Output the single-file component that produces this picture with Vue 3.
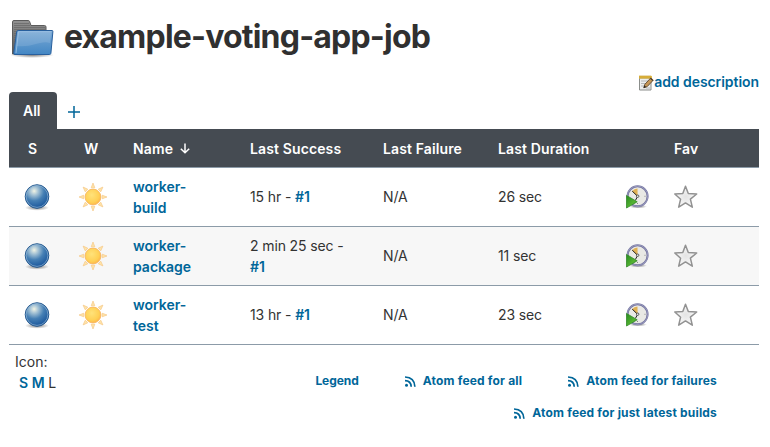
<script setup>
const jobs = [
  { name: ['worker-', 'build'], success: '15 hr -', duration: '26 sec' },
  { name: ['worker-', 'package'], success: '2 min 25 sec -', duration: '11 sec' },
  { name: ['worker-', 'test'], success: '13 hr -', duration: '23 sec' },
]
const feeds = ['all', 'failures', 'just latest builds']
const rays = [0, 45, 90, 135, 180, 225, 270, 315]
</script>

<template>
  <main class="page">
    <svg class="defs" width="0" height="0" aria-hidden="true">
      <defs>
        <linearGradient id="folderBack" x1="0" y1="0" x2="0" y2="1"><stop offset="0" stop-color="#929292" /><stop offset="1" stop-color="#555" /></linearGradient>
        <linearGradient id="folderFront" x1="0" y1="0" x2="0" y2="1"><stop offset="0" stop-color="#7ba9d5" /><stop offset="1" stop-color="#4387c4" /></linearGradient>
        <radialGradient id="shade"><stop offset="0" stop-color="#000" stop-opacity=".5" /><stop offset="1" stop-color="#000" stop-opacity="0" /></radialGradient>
        <radialGradient id="ball" cx=".38" cy=".27" r=".75"><stop offset="0" stop-color="#f2f4e4" /><stop offset=".22" stop-color="#a9c5d6" /><stop offset=".55" stop-color="#457fb4" /><stop offset="1" stop-color="#17539a" /></radialGradient>
        <radialGradient id="sun" cx=".42" cy=".38" r=".65"><stop offset="0" stop-color="#ffe27a" /><stop offset=".7" stop-color="#ffd055" /><stop offset="1" stop-color="#fdb548" /></radialGradient>
        <linearGradient id="play" x1="0" y1="0" x2="1" y2="1"><stop offset="0" stop-color="#278a20" /><stop offset=".6" stop-color="#55b432" /><stop offset="1" stop-color="#268018" /></linearGradient>
        <radialGradient id="star"><stop offset="0" stop-color="#e3e3e3" /><stop offset="1" stop-color="#fafafa" /></radialGradient>
      </defs>
    </svg>

    <header class="title">
      <svg class="folder" width="48" height="48" viewBox="0 0 48 48">
        <ellipse cx="23" cy="37" rx="22" ry="3" fill="url(#shade)" />
        <path d="M3.5 36V3.9q0-1.4 1.5-1.4h14.3q1 0 1.3 1l1.4 4h13.5q1.5 0 1.5 1.5v27z" fill="url(#folderBack)" stroke="#5b5b5b" />
        <path d="M5 5.5h15M5 7.5h16M5 9.5h31M5 11.5h31M5 13.5h3M5 15.5h3M5 17.5h2M5 19.5h2M5 21.5h2M5 23.5h2M5 25.5h2" stroke="#656565" stroke-width=".7" />
        <path d="M9.2 12.5h33.8q1 0 .9 1l-2 21.8q-.2 1.2-1.5 1.2H6q-1.4 0-1.3-1.4L7.7 13.8q.1-1.3 1.5-1.3z" fill="url(#folderFront)" stroke="#285f9d" />
        <path d="M9.3 13.7h33L41 25C31 22 24 30 7.4 28z" fill="#fff" opacity=".12" />
        <path d="M7 35L9.5 13.7h33" fill="none" stroke="#a9cae8" stroke-width=".7" />
      </svg>
      <h1>example-voting-app-job</h1>
    </header>

    <div class="describe">
      <svg width="16" height="16" viewBox="0 0 16 16">
        <path d="M1.5 3h11.5v12H1.5z" fill="#edeeee" stroke="#8b8e8b" />
        <path d="M1 .9h13v2.7H1z" fill="#e8c14c" />
        <path d="M2 .3v3M4 .3v3M6 .3v3M8 .3v3M10 .3v3M12 .3v3" stroke="#b88a17" stroke-width=".7" />
        <path d="M3 6h7M3 8.5h5M3 11h4M8 13h4" stroke="#b6b8b8" />
        <path d="M5.8 12.8l1-3.4 6-6.5 2.5 2.2-6.1 6.5z" fill="#c69656" stroke="#5d4528" stroke-width=".9" />
        <path d="M5.6 13l.9-2.6 1.6 1.5z" fill="#222" />
        <path d="M12.2 3.5l2.6 2.2" stroke="#3e3930" />
      </svg>
      <a>add description</a>
    </div>

    <nav class="tabs">
      <span class="tab">All</span>
      <a class="add" aria-label="New View">
        <svg width="12" height="12" viewBox="0 0 12 12"><path d="M6 0v12M0 6h12" stroke="#006699" stroke-width="1.5" /></svg>
      </a>
    </nav>

    <section class="jobs">
      <div class="row head">
        <span class="letter">S</span>
        <span class="letter">W</span>
        <span class="cell name-head">Name
          <svg width="10" height="11" viewBox="0 0 10 11"><path d="M5 .5v9.2M.8 5.7L5 9.8l4.2-4.1" fill="none" stroke="#fff" stroke-width="1.5" /></svg>
        </span>
        <span class="cell">Last Success</span>
        <span class="cell">Last Failure</span>
        <span class="cell">Last Duration</span>
        <span />
        <span class="fav">Fav</span>
      </div>
      <div v-for="job in jobs" :key="job.name[1]" class="row">
        <span class="status">
          <svg width="28" height="28" viewBox="0 0 28 28">
            <ellipse cx="14" cy="24.7" rx="12" ry="3" fill="url(#shade)" />
            <circle cx="14" cy="13.5" r="11.8" fill="url(#ball)" stroke="#174e87" stroke-width=".9" />
            <circle cx="14" cy="13.5" r="10.9" fill="none" stroke="#8eb2d2" stroke-width=".9" opacity=".8" />
          </svg>
        </span>
        <span class="status">
          <svg width="30" height="30" viewBox="0 0 30 30">
            <path v-for="ray in rays" :key="ray" d="M15 1L16.8 5.8H13.2z" fill="#ffe4a8" stroke="#f5c98a" stroke-width=".7" :transform="`rotate(${ray} 15 15)`" />
            <circle cx="15" cy="15" r="7.9" fill="url(#sun)" stroke="#f7b25c" stroke-width=".8" />
          </svg>
        </span>
        <a class="cell"><span>{{ job.name[0] }}<br />{{ job.name[1] }}</span></a>
        <span class="cell text"><span>{{ job.success }} <a>#1</a></span></span>
        <span class="cell text single">N/A</span>
        <span class="cell text single">{{ job.duration }}</span>
        <span class="build">
          <svg width="24" height="24" viewBox="0 0 24 24">
            <ellipse cx="13" cy="21.5" rx="9" ry="2" fill="url(#shade)" />
            <circle cx="12.6" cy="11.3" r="10" fill="#e9e9e5" stroke="#7475a0" stroke-width="2" />
            <circle cx="12.6" cy="11.3" r="10.2" fill="none" stroke="#a8a8c9" stroke-width=".7" />
            <path d="M12.6 11.4L7.1 6.2Q9.3 3.5 12.5 3.5z" fill="#e1b254" />
            <path d="M7.2 6.1l5.5 5.3M12.7 11.3l-2.3 4.1" stroke="#222" stroke-width="1" />
            <circle cx="12.7" cy="11.2" r="1.2" fill="#fff" stroke="#222" stroke-width=".7" />
            <path d="M19.5 11.3h1M12.5 18v1" stroke="#888" />
            <path d="M1.5 10.4L12.2 16.8 1.5 23z" fill="url(#play)" stroke="#348929" stroke-width=".8" />
          </svg>
        </span>
        <span class="fav">
          <svg width="24" height="24" viewBox="0 0 24 24"><path d="M11.5 1.2l2.8 7.4 8.4.4-6.3 5.2 1.9 8-6.8-4.3-6.8 4.3 1.9-8L.8 9l8-.4z" fill="url(#star)" stroke="#929292" stroke-width="1.5" stroke-linejoin="round" /></svg>
        </span>
      </div>
    </section>

    <footer class="footer">
      <div class="sizes">Icon:<br /><span class="options"><a>S</a> <a>M</a> L</span></div>
      <div class="links">
        <a class="legend">Legend</a>
        <a v-for="feed in feeds" :key="feed" class="feed">
          <svg width="11" height="11" viewBox="0 0 11 11"><circle cx="1.5" cy="9.3" r="1.5" fill="#006699" /><path d="M0 4.6q6 .1 6.2 6.2M0 1q9.6.3 9.9 9.8" fill="none" stroke="#006699" stroke-width="1.7" /></svg>
          <span>Atom feed for {{ feed }}</span>
        </a>
      </div>
    </footer>
  </main>
</template>

<style>
body { margin: 0; background: #fff; }
</style>

<style scoped>
.page { box-sizing: border-box; width: 770px; height: 447px; padding: 0 11px 0 9px; overflow: hidden; color: #333; font: 14px/21px Inter, "Liberation Sans", sans-serif; }
.defs { display: block; height: 0; }
svg { display: block; flex: none; }
a { color: #006699; font-weight: 600; }
.title { display: flex; height: 73px; }
.folder { margin-top: 18px; }
h1 { margin: 15px 0 0 7px; font-size: 32px; line-height: 44px; font-weight: 700; letter-spacing: -.8px; color: #303030; white-space: nowrap; }
.describe { display: flex; justify-content: flex-end; height: 19px; line-height: 18px; letter-spacing: -.06px; }
.describe svg { margin-top: 2px; }
.tabs { display: flex; align-items: center; height: 37px; }
.tab { width: 48px; height: 37px; box-sizing: border-box; padding-left: 14px; border-radius: 4px 4px 0 0; background: #454b52; color: #fff; font-weight: 600; line-height: 38px; }
.add { margin: 3px 0 0 11px; }
.row { display: grid; grid-template-columns: 56px 56px 117px 133px 115px 127px 49px 97px; align-items: center; height: 59px; box-sizing: border-box; border-bottom: 1px solid #8c9ba8; }
.row:nth-child(odd):not(.head) { background: #f7f7f7; }
.head { height: 39px; background: #454b52; color: #fff; font-weight: 600; letter-spacing: .12px; }
.letter { padding-left: 19px; }
.cell { padding-left: 12px; white-space: nowrap; }
.text { letter-spacing: -.12px; }
.text:nth-child(4) { white-space: normal; padding-right: 18px; }
.single, .row:not(:nth-child(3)) .text { padding-bottom: 1px; }
.name-head { display: flex; align-items: center; gap: 7px; }
.status { display: flex; justify-content: center; }
.build, .fav { padding-left: 12px; }
.footer { display: flex; justify-content: space-between; }
.sizes { padding: 6px 0 0 6px; }
.options { padding-left: 4px; letter-spacing: -.15px; }
.links { display: flex; flex-wrap: wrap; justify-content: flex-end; column-gap: 46px; row-gap: 11px; width: 460px; padding: 25px 42px 0 0; box-sizing: border-box; font-size: 12px; }
.links a { font-weight: 700; letter-spacing: .18px; }
.links .legend { letter-spacing: -.05px; }
.feed { display: flex; align-items: center; gap: 7px; }
.feed svg { margin-top: 1px; }
</style>
